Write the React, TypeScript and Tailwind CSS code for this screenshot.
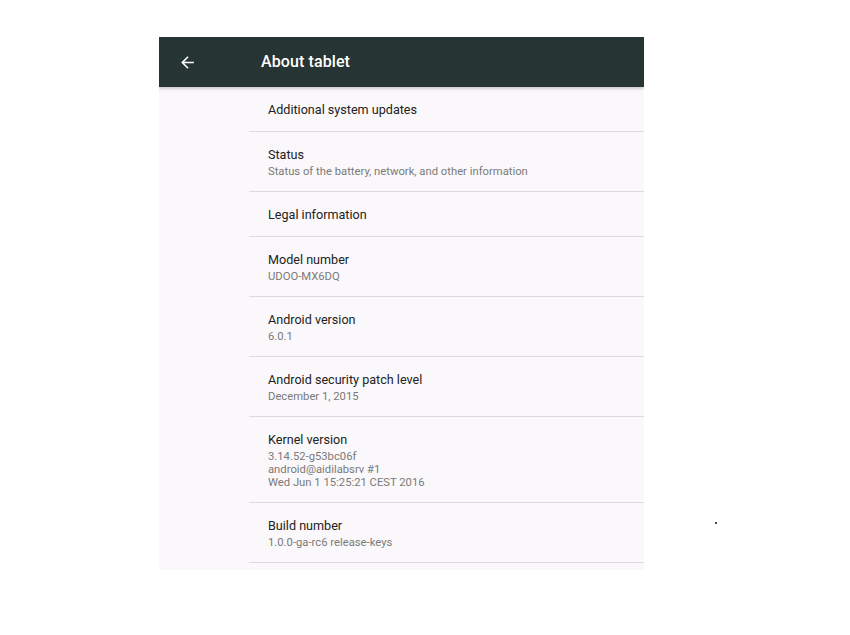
import React from "react";

type Item = { title: string; lines?: string[] };

const items: Item[] = [
  { title: "Additional system updates" },
  { title: "Status", lines: ["Status of the battery, network, and other information"] },
  { title: "Legal information" },
  { title: "Model number", lines: ["UDOO-MX6DQ"] },
  { title: "Android version", lines: ["6.0.1"] },
  { title: "Android security patch level", lines: ["December 1, 2015"] },
  { title: "Kernel version", lines: ["3.14.52-g53bc06f", "android@aidilabsrv #1", "Wed Jun 1 15:25:21 CEST 2016"] },
  { title: "Build number", lines: ["1.0.0-ga-rc6 release-keys"] },
];

export default function App() {
  return (
    <div
      className="relative w-[850px] h-[635px] bg-white pt-[37px] pl-[159px]"
      style={{ fontFamily: "Roboto, 'Noto Sans', sans-serif" }}
    >
      <div className="w-[485px] h-[533px] bg-[#faf8fa] flex flex-col overflow-hidden">
        <div className="relative h-[50px] bg-[#273434] flex items-center shrink-0 shadow-[0_2px_3px_rgba(0,0,0,0.18)] z-10">
          <div className="w-[102px] flex items-center pl-[19px]">
            <svg width="19" height="19" viewBox="0 0 24 24" fill="#ffffff">
              <path d="M20 11H7.83l5.59-5.59L12 4l-8 8 8 8 1.41-1.41L7.83 13H20v-2z" />
            </svg>
          </div>
          <div className="text-white text-[16px] font-medium tracking-[0.1px]">About tablet</div>
        </div>
        <div className="flex flex-col pl-[90px]">
          {items.map((it) => (
            <div key={it.title} className="border-b border-[#dcdadc] pl-[19px] pt-[15px] pb-[13px]">
              <div className="text-[12.6px] leading-[16px] text-[#222222]">{it.title}</div>
              {it.lines && (
                <div className="mt-[2px]">
                  {it.lines.map((l) => (
                    <div key={l} className="text-[11.25px] leading-[13px] text-[#7a7a7a]">
                      {l}
                    </div>
                  ))}
                </div>
              )}
            </div>
          ))}
        </div>
      </div>
      <div className="absolute left-[715px] top-[522px] w-[2px] h-[2px] bg-[#444]" />
    </div>
  );
}
